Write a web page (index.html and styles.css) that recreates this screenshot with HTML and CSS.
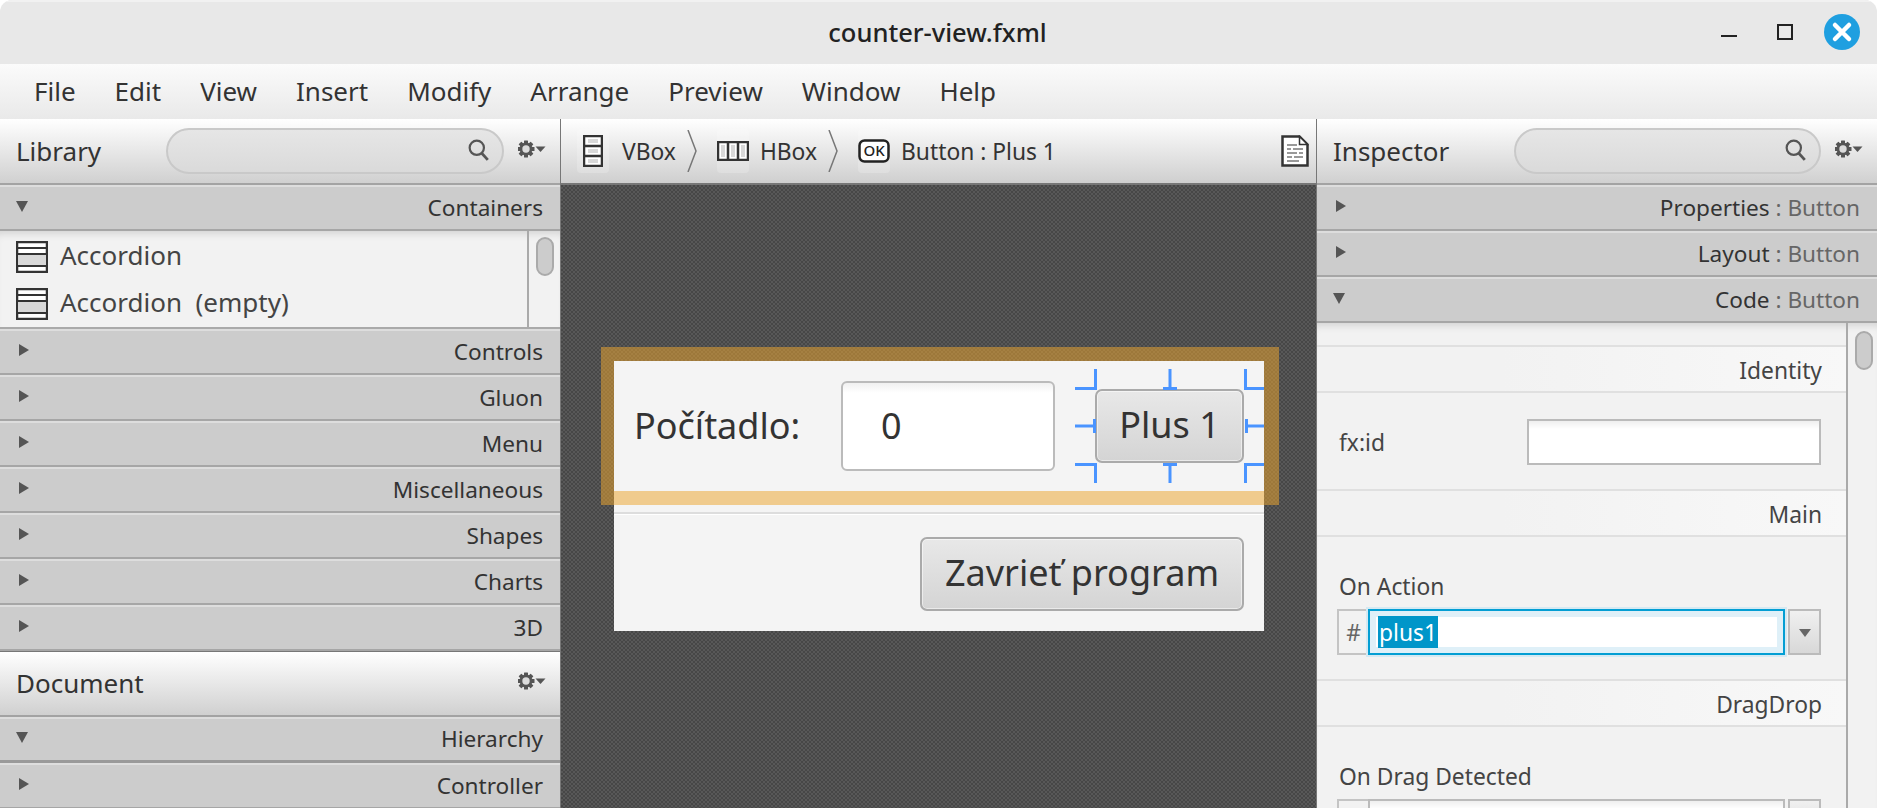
FILE: index.html
```html
<!DOCTYPE html>
<html lang="en">
<head>
<meta charset="utf-8">
<title>counter-view.fxml</title>
<link rel="stylesheet" href="styles.css">
</head>
<body>
<svg class="defs" width="0" height="0" aria-hidden="true">
  <defs>
    <symbol id="gear" viewBox="0 0 28 18">
      <g fill="#555">
        <g id="teeth">
          <rect x="6" y="0.5" width="4" height="17" rx="0.5"/>
          <rect x="6" y="0.5" width="4" height="17" rx="0.5" transform="rotate(45 8 9)"/>
          <rect x="6" y="0.5" width="4" height="17" rx="0.5" transform="rotate(90 8 9)"/>
          <rect x="6" y="0.5" width="4" height="17" rx="0.5" transform="rotate(135 8 9)"/>
        </g>
        <circle cx="8" cy="9" r="6.5"/>
        <path d="M17.5 6.5h10l-5 5.500z"/>
      </g>
      <circle cx="8" cy="9" r="3.700" fill="#dcdcdc"/>
    </symbol>
    <symbol id="search" viewBox="0 0 20 20">
      <circle cx="8" cy="8" r="6.500" fill="none" stroke="#555" stroke-width="2"/>
      <path d="M12.500 13l5.500 6" fill="none" stroke="#555" stroke-width="2.500"/>
    </symbol>
    <symbol id="accordion" viewBox="0 0 32 32">
      <rect x="1" y="1" width="30" height="30" fill="#fff" stroke="#333" stroke-width="2.500"/>
      <rect x="2" y="14" width="28" height="10" fill="#d8d8d8"/>
      <path d="M1 7h30M1 13h30M1 25h30" stroke="#333" stroke-width="2" fill="none"/>
    </symbol>
  </defs>
</svg>
<div class="window">
  <header class="titlebar">
    <span class="title">counter-view.fxml</span>
    <div class="wm">
      <span class="wm-min"></span>
      <span class="wm-max"></span>
      <svg class="wm-close" width="36" height="36" viewBox="0 0 36 36"><circle cx="18" cy="18" r="18" fill="#1f9fe0"/><path d="M11 11l14 14M25 11L11 25" stroke="#fff" stroke-width="4.500" stroke-linecap="round"/></svg>
    </div>
  </header>
  <nav class="menubar">
    <span>File</span><span>Edit</span><span>View</span><span>Insert</span><span>Modify</span><span>Arrange</span><span>Preview</span><span>Window</span><span>Help</span>
  </nav>
  <main class="workspace">
    <aside class="left">
      <div class="panel-head">
        <span class="panel-title">Library</span>
        <div class="search"><svg class="search-icon" width="22" height="22"><use href="#search"/></svg></div>
        <svg class="gear" width="28" height="18"><use href="#gear"/></svg>
      </div>
      <div class="acc"><span class="tri-down"></span><span>Containers</span></div>
      <div class="lib-list">
        <div class="lib-rows">
          <div class="lib-row"><svg width="32" height="32"><use href="#accordion"/></svg><span>Accordion</span></div>
          <div class="lib-row"><svg width="32" height="32"><use href="#accordion"/></svg><span>Accordion&nbsp; (empty)</span></div>
        </div>
        <div class="scroll-col"><span class="thumb"></span></div>
      </div>
      <div class="acc"><span class="tri-right"></span><span>Controls</span></div>
      <div class="acc"><span class="tri-right"></span><span>Gluon</span></div>
      <div class="acc"><span class="tri-right"></span><span>Menu</span></div>
      <div class="acc"><span class="tri-right"></span><span>Miscellaneous</span></div>
      <div class="acc"><span class="tri-right"></span><span>Shapes</span></div>
      <div class="acc"><span class="tri-right"></span><span>Charts</span></div>
      <div class="acc"><span class="tri-right"></span><span>3D</span></div>
      <div class="panel-head panel-head-doc">
        <span class="panel-title">Document</span>
        <svg class="gear" width="28" height="18"><use href="#gear"/></svg>
      </div>
      <div class="acc acc-open"><span class="tri-down"></span><span>Hierarchy</span></div>
      <div class="acc"><span class="tri-right"></span><span>Controller</span></div>
    </aside>

    <section class="center">
      <div class="crumbs">
        <span class="crumb-icon">
          <svg width="20" height="32" viewBox="0 0 20 32"><rect x="1" y="1" width="18" height="30" fill="#fff" stroke="#333" stroke-width="2.500"/><path d="M1 11h18M1 21h18" stroke="#333" stroke-width="2.500"/><path d="M5 6h10M5 16h10M5 26h10" stroke="#d8d8d8" stroke-width="4"/></svg>
        </span>
        <span class="crumb-text crumb-first">VBox</span>
        <svg class="chev" width="10" height="42" viewBox="0 0 10 42"><path d="M1 0l8 21-8 21" fill="none" stroke="#777" stroke-width="1.500"/></svg>
        <span class="crumb-icon">
          <svg width="32" height="20" viewBox="0 0 32 20"><rect x="1" y="1" width="30" height="18" fill="#fff" stroke="#333" stroke-width="2.500"/><path d="M11 1v18M21 1v18" stroke="#333" stroke-width="2.500"/><path d="M6 4v12M16 4v12M26 4v12" stroke="#d8d8d8" stroke-width="4"/></svg>
        </span>
        <span class="crumb-text">HBox</span>
        <svg class="chev" width="10" height="42" viewBox="0 0 10 42"><path d="M1 0l8 21-8 21" fill="none" stroke="#777" stroke-width="1.500"/></svg>
        <span class="crumb-icon">
          <svg width="32" height="24" viewBox="0 0 32 24"><rect x="1.500" y="1.500" width="29" height="21" rx="5" fill="#fff" stroke="#222" stroke-width="2.500"/><text x="16" y="17" text-anchor="middle" class="ok-text">OK</text></svg>
        </span>
        <span class="crumb-text">Button : Plus 1</span>
        <svg class="doc" width="28" height="32" viewBox="0 0 28 32"><path d="M1.500 1.500h17l8 8v21h-25z" fill="#fff" stroke="#333" stroke-width="2.500"/><path d="M18.500 1.500v8h8z" fill="#fff" stroke="#333" stroke-width="1.500"/><path d="M6 10h10M6 14h4M12 14h10M6 18h10M18 18h4M6 22h5M13 22h9M6 26h12" stroke="#999" stroke-width="2"/></svg>
      </div>
      <div class="canvas">
        <div class="form">
          <div class="row-top">
            <span class="count-label">Počítadlo:</span>
            <span class="count-field">0</span>
            <span class="btn btn-plus">Plus 1</span>
          </div>
          <div class="form-sep"></div>
          <div class="row-bottom">
            <span class="btn btn-close">Zavrieť program</span>
          </div>
        </div>
        <div class="hbox-outline"></div>
        <svg class="handles" width="189" height="114" viewBox="0 0 189 114">
          <g fill="none" stroke="#4a94ff" stroke-width="3">
            <path d="M0 19.500h20.500V0"/>
            <path d="M88 19.500h14M95 0v19"/>
            <path d="M189 19.500h-18.500V0"/>
            <path d="M0 57h20M19.500 50v14"/>
            <path d="M171 57h18M171.500 50v14"/>
            <path d="M0 95.500h20.500V114"/>
            <path d="M88 95.500h14M95 96v18"/>
            <path d="M189 95.500h-18.500V114"/>
          </g>
        </svg>
      </div>
    </section>

    <aside class="right">
      <div class="panel-head">
        <span class="panel-title">Inspector</span>
        <div class="search search-insp"><svg class="search-icon" width="22" height="22"><use href="#search"/></svg></div>
        <svg class="gear" width="28" height="18"><use href="#gear"/></svg>
      </div>
      <div class="acc"><span class="tri-right"></span><span>Properties <span class="dim">: Button</span></span></div>
      <div class="acc"><span class="tri-right"></span><span>Layout <span class="dim">: Button</span></span></div>
      <div class="acc"><span class="tri-down"></span><span>Code <span class="dim">: Button</span></span></div>
      <div class="insp-body">
        <div class="insp-content">
          <div class="insp-gap"></div>
          <div class="sec-head">Identity</div>
          <div class="fx-row">
            <span class="fx-label">fx:id</span>
            <span class="fx-field"></span>
          </div>
          <div class="sec-head">Main</div>
          <div class="prop">
            <div class="prop-label">On Action</div>
            <div class="combo">
              <span class="hash">#</span>
              <span class="combo-input focused"><span class="sel">plus1</span></span>
              <span class="combo-arrow"><span class="tri-small"></span></span>
            </div>
          </div>
          <div class="sec-head">DragDrop</div>
          <div class="prop">
            <div class="prop-label">On Drag Detected</div>
            <div class="combo">
              <span class="hash"></span>
              <span class="combo-input"></span>
              <span class="combo-arrow"><span class="tri-small"></span></span>
            </div>
          </div>
        </div>
        <div class="scroll-col scroll-col-insp"><span class="thumb"></span></div>
      </div>
    </aside>
  </main>
</div>
</body>
</html>
```

FILE: styles.css
```css
* { box-sizing: border-box; }
html, body { margin: 0; padding: 0; height: 100%; background: #fff; overflow: hidden; }
body { font-family: "Noto Sans", sans-serif; color: #333; }
.defs { position: absolute; }

.window { width: 1877px; height: 808px; display: flex; flex-direction: column; overflow: hidden; border-radius: 12px 12px 0 0; }

.titlebar { height: 64px; flex: none; background: #e8e8e8; border-top: 2px solid #f1f1f1; position: relative; display: flex; align-items: center; justify-content: center; }
.title { font-size: 25.5px; font-weight: 500; color: #222; margin: -2px 2px 0 0; }
.wm { position: absolute; top: 12px; right: 17px; display: flex; align-items: center; height: 36px; }
.wm-min { width: 16px; height: 2px; background: #222; margin-top: 8px; margin-right: 40px; }
.wm-max { width: 16px; height: 16px; border: 2px solid #222; margin-right: 31px; }

.menubar { height: 55px; flex: none; display: flex; align-items: center; gap: 39px; padding: 0 0 2px 34px; font-size: 26px; color: #333; background: linear-gradient(#fbfbfb, #e9e9e9); }

.workspace { flex: 1; display: flex; min-height: 0; }
.left { width: 560px; flex: none; background: #f2f2f2; }
.center { flex: 1; min-width: 0; display: flex; flex-direction: column; border-left: 1px solid #777; border-right: 1px solid #777; }
.right { width: 560px; flex: none; background: #f2f2f2; display: flex; flex-direction: column; }

.panel-head { height: 66px; display: flex; align-items: center; padding: 0 14px 0 16px; background: linear-gradient(#fff, #d0d0d0); border-bottom: 2px solid #a3a3a3; position: relative; }
.panel-head-doc { justify-content: space-between; border-top: 1px solid #777; padding-bottom: 1px; }
.panel-title { font-size: 26px; color: #333; }
.search { height: 46px; width: 338px; margin-left: auto; margin-right: 14px; border: 2px solid #c9c9c9; border-radius: 23px; background: linear-gradient(#e6e6e6, #dadada); display: flex; align-items: center; justify-content: flex-end; padding-right: 12px; }
.search-insp { width: 307px; }
.search-icon { display: block; margin-top: -2px; }
.gear { display: block; margin-top: -4px; }

.acc { height: 46px; display: flex; align-items: center; justify-content: space-between; padding: 0 17px 2px 19px; font-size: 22.6px; color: #333; background: #ccc; border-top: 2px solid #ddd; border-bottom: 2px solid #a6a6a6; }
.acc-open { border-bottom-width: 3px; border-bottom-color: #999; padding-bottom: 3px; }
.dim { color: #666; }
.tri-right { width: 0; height: 0; border-left: 10px solid #555; border-top: 6px solid transparent; border-bottom: 6px solid transparent; margin-top: -2px; }
.tri-down { width: 0; height: 0; border-top: 11px solid #555; border-left: 6px solid transparent; border-right: 6px solid transparent; margin-left: -3px; margin-top: -2px; }
.tri-small { width: 0; height: 0; border-top: 8px solid #666; border-left: 6px solid transparent; border-right: 6px solid transparent; margin-top: 1px; }

.lib-list { height: 98px; display: flex; background: #f2f2f2; border-bottom: 2px solid #aaa; box-shadow: inset 0 8px 8px -6px rgba(0,0,0,.15); }
.lib-rows { flex: 1; padding-left: 16px; padding-top: 2px; }
.lib-row { height: 47px; display: flex; align-items: center; gap: 12px; font-size: 26px; color: #444; }
.lib-row span { margin-top: -4px; }
.lib-row svg { display: block; }
.scroll-col { width: 33px; flex: none; border-left: 2px solid #aaa; padding: 6px 0 0 7px; }
.scroll-col-insp { width: 31px; padding: 8px 0 0 7px; }
.thumb { display: block; width: 18px; height: 39px; border-radius: 9px; border: 2px solid #aaa; background: #ccc; }

.crumbs { height: 66px; flex: none; display: flex; align-items: center; gap: 13px; padding-left: 16px; padding-right: 7px; background: linear-gradient(#fff, #cfcfcf); border-bottom: 2px solid #777; font-size: 22.8px; color: #333; }
.crumb-icon { width: 32px; height: 44px; display: flex; align-items: center; justify-content: center; border-radius: 4px; background: rgba(255,255,255,.2); }
.crumb-icon svg { display: block; }
.crumb-text { margin-left: -2px; }
.crumb-first { margin-left: 0; }
.chev { display: block; margin: 0 7px 0 -2px; }
.ok-text { font-family: "Noto Sans", sans-serif; font-size: 15px; font-weight: 500; fill: #222; }
.doc { margin-left: auto; display: block; }

.canvas { flex: 1; position: relative; overflow: hidden; padding: 176px 0 0 53px; background-color: #4c4c4c; background-image: conic-gradient(#585858 25%, #474747 0 50%, #585858 0 75%, #474747 0); background-size: 4px 4px; }
.form { width: 650px; height: 270px; background: #f4f4f4; display: flex; flex-direction: column; }
.row-top { height: 151px; display: flex; padding: 20px 20px 0 20px; }
.count-label { font-size: 36px; color: #333; width: 207px; height: 90px; padding-bottom: 2px; display: flex; align-items: center; }
.count-field { width: 214px; height: 90px; border: 2px solid #bbb; border-radius: 6px; background: linear-gradient(#f0f0f0, #fff 10px); font-size: 36px; display: flex; align-items: center; padding: 0 0 2px 38px; }
.btn { height: 74px; border: 2px solid #aaa; border-radius: 7px; background: linear-gradient(#e8e8e8, #d4d4d4); box-shadow: inset 0 0 0 1px rgba(255,255,255,.5); font-size: 36px; color: #333; display: flex; align-items: center; justify-content: center; padding-bottom: 3px; }
.btn-plus { width: 149px; margin: 8px 0 0 40px; }
.form-sep { height: 3px; background: #ddd; border-bottom: 1px solid #fff; }
.row-bottom { flex: 1; display: flex; justify-content: flex-end; padding: 22px 20px 0 0; }
.btn-close { width: 324px; }

.hbox-outline { position: absolute; left: 40px; top: 162px; width: 678px; height: 158px; border: solid rgba(236,166,47,.524); border-width: 14px 15px 14px 13px; }
.handles { position: absolute; left: 514px; top: 184px; }

.insp-body { flex: 1; display: flex; min-height: 0; box-shadow: inset 0 8px 8px -6px rgba(0,0,0,.15); }
.insp-content { flex: 1; min-width: 0; font-size: 22.8px; color: #444; overflow: hidden; }
.insp-gap { height: 22px; }
.sec-head { height: 48px; display: flex; align-items: center; justify-content: flex-end; padding: 3px 24px 0 0; border-top: 2px solid #e0e0e0; border-bottom: 2px solid #e0e0e0; background: linear-gradient(90deg, #f2f2f2 35%, #f8f8f8); }
.fx-row { height: 96px; display: flex; align-items: center; justify-content: space-between; padding: 0 25px 0 22px; }
.fx-label { margin-top: 2px; }
.fx-field { width: 294px; height: 46px; border: 2px solid #bbb; background: linear-gradient(#efefef, #fff 8px); margin-top: 2px; }
.prop { height: 142px; padding: 36px 25px 0 20px; }
.prop-label { height: 28px; line-height: 28px; padding-left: 2px; }
.combo { margin-top: 8px; height: 46px; display: flex; }
.hash { width: 31px; flex: none; border: 2px solid #c4c4c4; border-right: 0; display: flex; align-items: center; justify-content: center; color: #666; background: #f2f2f2; }
.combo-input { flex: 1; border: 2px solid #bbb; background: linear-gradient(#efefef, #fff 8px); display: flex; align-items: center; }
.combo-input.focused { border-color: #039ed3; box-shadow: 0 0 0 2px #d5e9f2, inset 0 0 0 6px #dff0f8; background: #fff; padding-left: 8px; }
.sel { background: #0096c9; color: #fff; height: 32px; line-height: 33px; padding: 0 1px; font-size: 22.8px; }
.combo-arrow { width: 33px; flex: none; margin-left: 3px; border: 2px solid #bbb; background: linear-gradient(#f0f0f0, #d8d8d8); display: flex; align-items: center; justify-content: center; }
```
